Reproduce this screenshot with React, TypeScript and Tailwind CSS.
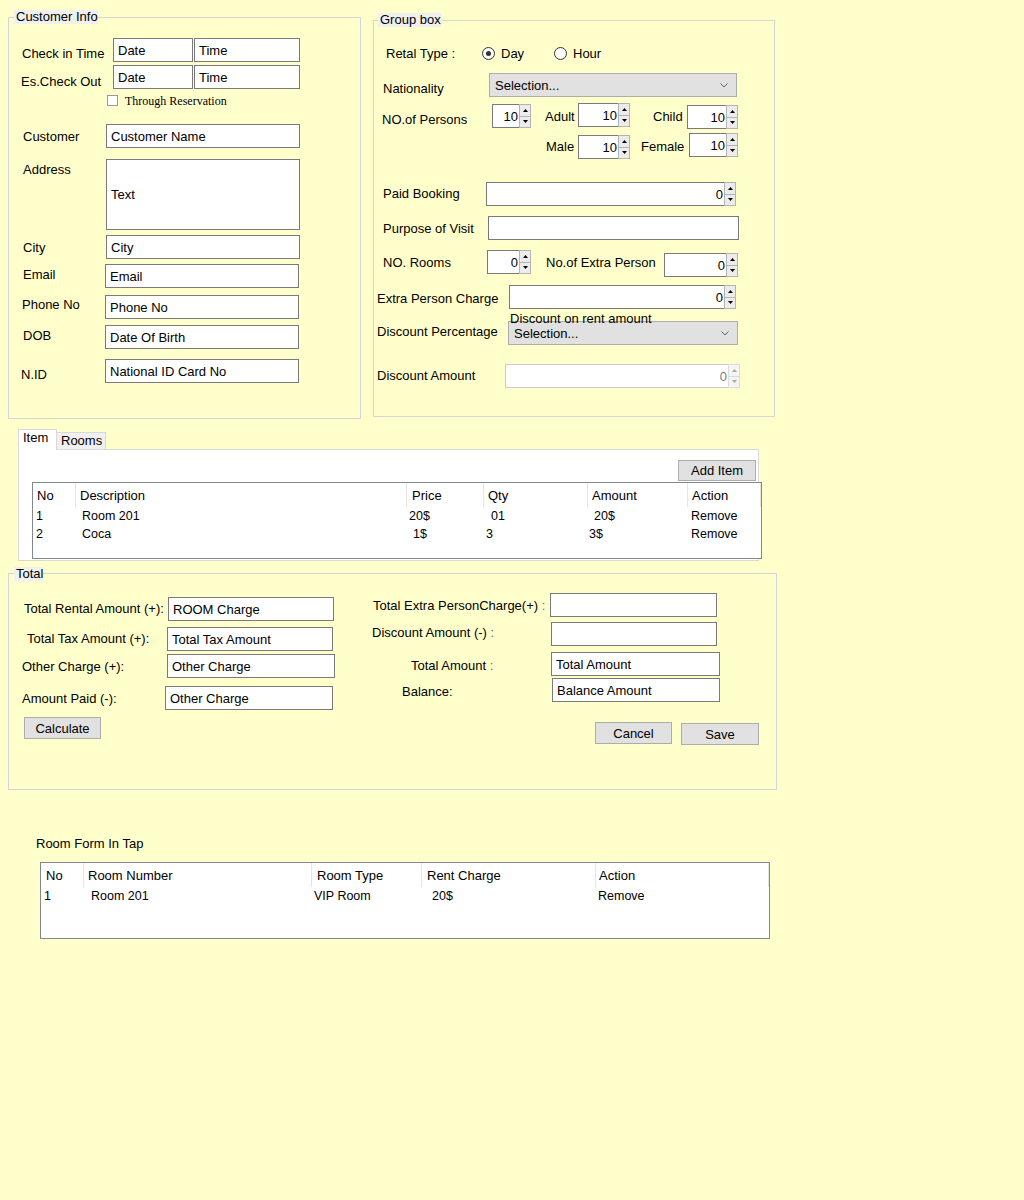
import React from "react";

type Cell = [string, string];

function Field({ children, className = "" }: { children?: React.ReactNode; className?: string }) {
  return (
    <div className={`flex h-[24px] shrink-0 items-center whitespace-nowrap border border-[#7a7a7a] bg-white pl-[4px] ${className}`}>
      {children}
    </div>
  );
}

function Btn({ children, className = "" }: { children: React.ReactNode; className?: string }) {
  return (
    <div className={`flex shrink-0 items-center justify-center border border-[#adadad] bg-[#e1e1e1] ${className}`}>
      {children}
    </div>
  );
}

function Arrow({ up, color }: { up?: boolean; color: string }) {
  return (
    <svg width="5" height="3" viewBox="0 0 5 3">
      <polygon points={up ? "0,3 2.5,0 5,3" : "0,0 2.5,3 5,0"} fill={color} />
    </svg>
  );
}

function Spin({ value, className = "", disabled = false }: { value: string; className?: string; disabled?: boolean }) {
  return (
    <div className={`flex h-[24px] shrink-0 ${className}`}>
      <div
        className={
          disabled
            ? "flex min-w-0 flex-1 items-center justify-end border-y border-l border-[#cccccc] bg-white pr-[1px] text-[#7a7a7a]"
            : "flex min-w-0 flex-1 items-center justify-end border-y border-l border-[#7a7a7a] bg-white pr-[1px]"
        }
      >
        {value}
      </div>
      <div className="flex w-[12px] flex-col">
        <div className={disabled ? "flex flex-1 items-center justify-center border border-[#dcdcdc] bg-[#f4f4f4]" : "flex flex-1 items-center justify-center border border-[#b4b4b4] bg-[#ececec]"}>
          <Arrow up color={disabled ? "#a8a8a8" : "#000000"} />
        </div>
        <div className={disabled ? "flex flex-1 items-center justify-center border border-t-0 border-[#dcdcdc] bg-[#f4f4f4]" : "flex flex-1 items-center justify-center border border-t-0 border-[#b4b4b4] bg-[#ececec]"}>
          <Arrow color={disabled ? "#a8a8a8" : "#000000"} />
        </div>
      </div>
    </div>
  );
}

function Combo({ className = "" }: { className?: string }) {
  return (
    <div className={`flex h-[24px] shrink-0 items-center justify-between border border-[#adadad] bg-[#e1e1e1] pl-[5px] pr-[8px] ${className}`}>
      <span>Selection...</span>
      <svg width="8" height="5" viewBox="0 0 8 5">
        <polyline points="0.5,0.5 4,4 7.5,0.5" fill="none" stroke="#606060" strokeWidth="1" />
      </svg>
    </div>
  );
}

function Radio({ checked }: { checked?: boolean }) {
  return (
    <span className="flex h-[13px] w-[13px] shrink-0 items-center justify-center rounded-full border border-[#333333] bg-white">
      {checked && <span className="h-[5px] w-[5px] rounded-full bg-[#333333]" />}
    </span>
  );
}

function ListView({
  cols,
  rows,
  className = "",
}: {
  cols: { w: string; label: string; pl: string }[];
  rows: Cell[][];
  className?: string;
}) {
  return (
    <div className={`h-[77px] w-[730px] shrink-0 border border-[#828790] bg-white ${className}`}>
      <div className="flex h-[24px]">
        {cols.map((c) => (
          <div key={c.label} className={`flex shrink-0 items-center border-r border-[#e5e5e5] whitespace-nowrap ${c.w} ${c.pl}`}>
            {c.label}
          </div>
        ))}
      </div>
      {rows.map((r, i) => (
        <div key={i} className="flex h-[18px] text-[12.5px] leading-[18px]">
          {r.map(([text, pl], j) => (
            <div key={j} className={`shrink-0 whitespace-nowrap ${cols[j].w} ${pl}`}>
              {text}
            </div>
          ))}
        </div>
      ))}
    </div>
  );
}

const itemCols = [
  { w: "w-[43px]", label: "No", pl: "pl-[4px]" },
  { w: "w-[331px]", label: "Description", pl: "pl-[4px]" },
  { w: "w-[77px]", label: "Price", pl: "pl-[5px]" },
  { w: "w-[104px]", label: "Qty", pl: "pl-[4px]" },
  { w: "w-[100px]", label: "Amount", pl: "pl-[4px]" },
  { w: "w-[73px]", label: "Action", pl: "pl-[4px]" },
];

const itemRows: Cell[][] = [
  [["1", "pl-[3px]"], ["Room 201", "pl-[6px]"], ["20$", "pl-[2px]"], ["01", "pl-[7px]"], ["20$", "pl-[6px]"], ["Remove", "pl-[3px]"]],
  [["2", "pl-[3px]"], ["Coca", "pl-[6px]"], ["1$", "pl-[6px]"], ["3", "pl-[2px]"], ["3$", "pl-[1px]"], ["Remove", "pl-[3px]"]],
];

const roomCols = [
  { w: "w-[43px]", label: "No", pl: "pl-[5px]" },
  { w: "w-[228px]", label: "Room Number", pl: "pl-[4px]" },
  { w: "w-[110px]", label: "Room Type", pl: "pl-[5px]" },
  { w: "w-[174px]", label: "Rent Charge", pl: "pl-[5px]" },
  { w: "w-[173px]", label: "Action", pl: "pl-[3px]" },
];

const roomRows: Cell[][] = [
  [["1", "pl-[3px]"], ["Room 201", "pl-[7px]"], ["VIP Room", "pl-[2px]"], ["20$", "pl-[10px]"], ["Remove", "pl-[2px]"]],
];

function CustomerInfo() {
  return (
    <div className="relative flex h-[402px] w-[353px] shrink-0 flex-col border border-[#d5d5d5]">
      <div className="absolute left-[5px] top-[-8px] h-[14px] whitespace-nowrap bg-[#f0f0f0] pl-[2px] leading-[14px]">Customer Info</div>

      <div className="mt-[20px] flex h-[24px]">
        <div className="w-[104px] shrink-0 whitespace-nowrap pl-[13px] pt-[8px]">Check in Time</div>
        <Field className="w-[80px]">Date</Field>
        <Field className="ml-[1px] w-[106px]">Time</Field>
      </div>
      <div className="mt-[3px] flex h-[24px]">
        <div className="w-[104px] shrink-0 whitespace-nowrap pl-[12px] pt-[9px]">Es.Check Out</div>
        <Field className="w-[80px]">Date</Field>
        <Field className="ml-[1px] w-[106px]">Time</Field>
      </div>
      <div className="mt-[6px] flex h-[11px] items-center pl-[98px]">
        <div className="h-[11px] w-[11px] shrink-0 border border-[#9a9a9a] bg-white" />
        <span className="ml-[7px] whitespace-nowrap font-['Liberation_Serif','Times_New_Roman',serif] text-[12px] leading-[14px]">
          Through Reservation
        </span>
      </div>

      <div className="mt-[18px] flex h-[24px]">
        <div className="w-[97px] shrink-0 pl-[14px] pt-[5px]">Customer</div>
        <Field className="w-[194px]">Customer Name</Field>
      </div>
      <div className="mt-[11px] flex">
        <div className="w-[97px] shrink-0 pl-[14px] pt-[3px]">Address</div>
        <Field className="h-[71px] w-[194px]">Text</Field>
      </div>
      <div className="mt-[5px] flex h-[24px]">
        <div className="w-[97px] shrink-0 pl-[14px] pt-[5px]">City</div>
        <Field className="w-[194px]">City</Field>
      </div>
      <div className="mt-[5px] flex h-[24px]">
        <div className="w-[96px] shrink-0 pl-[14px] pt-[3px]">Email</div>
        <Field className="w-[194px]">Email</Field>
      </div>
      <div className="mt-[7px] flex h-[24px]">
        <div className="w-[96px] shrink-0 pl-[13px] pt-[2px]">Phone No</div>
        <Field className="w-[194px]">Phone No</Field>
      </div>
      <div className="mt-[6px] flex h-[24px]">
        <div className="w-[96px] shrink-0 pl-[14px] pt-[3px]">DOB</div>
        <Field className="w-[194px]">Date Of Birth</Field>
      </div>
      <div className="mt-[10px] flex h-[24px]">
        <div className="w-[96px] shrink-0 pl-[12px] pt-[8px]">N.ID</div>
        <Field className="w-[194px]">National ID Card No</Field>
      </div>
    </div>
  );
}

function GroupBox() {
  return (
    <div className="relative ml-[12px] mt-[3px] flex h-[397px] w-[402px] shrink-0 flex-col border border-[#d5d5d5]">
      <div className="absolute left-[4px] top-[-8px] h-[14px] whitespace-nowrap bg-[#f0f0f0] pl-[2px] pr-[1px] leading-[14px]">Group box</div>

      <div className="mt-[25px] flex h-[15px] items-center">
        <div className="w-[108px] shrink-0 whitespace-nowrap pl-[12px]">Retal Type :</div>
        <div className="flex w-[72px] shrink-0 items-center">
          <Radio checked />
          <span className="ml-[6px]">Day</span>
        </div>
        <div className="flex items-center">
          <Radio />
          <span className="ml-[6px]">Hour</span>
        </div>
      </div>

      <div className="mt-[12px] flex h-[24px]">
        <div className="w-[115px] shrink-0 pl-[9px] pt-[8px]">Nationality</div>
        <Combo className="w-[248px]" />
      </div>

      <div className="mt-[6px] flex items-start">
        <div className="w-[118px] shrink-0 whitespace-nowrap pl-[8px] pt-[9px]">NO.of Persons</div>
        <Spin value="10" className="mt-[1px] w-[39px]" />
        <div className="w-[47px] shrink-0 pl-[14px] pt-[6px]">Adult</div>
        <Spin value="10" className="w-[52px]" />
        <div className="w-[57px] shrink-0 pl-[23px] pt-[6px]">Child</div>
        <Spin value="10" className="mt-[2px] w-[51px]" />
      </div>
      <div className="mt-[4px] flex items-start">
        <div className="w-[204px] shrink-0 pl-[172px] pt-[6px]">Male</div>
        <Spin value="10" className="mt-[2px] w-[52px]" />
        <div className="w-[59px] shrink-0 pl-[11px] pt-[6px]">Female</div>
        <Spin value="10" className="w-[49px]" />
      </div>

      <div className="mt-[23px] flex h-[24px]">
        <div className="w-[112px] shrink-0 whitespace-nowrap pl-[9px] pt-[4px]">Paid Booking</div>
        <Spin value="0" className="w-[250px]" />
      </div>
      <div className="mt-[10px] flex h-[24px]">
        <div className="w-[114px] shrink-0 whitespace-nowrap pl-[9px] pt-[5px]">Purpose of Visit</div>
        <Field className="w-[251px]" />
      </div>
      <div className="mt-[10px] flex items-start">
        <div className="w-[113px] shrink-0 whitespace-nowrap pl-[9px] pt-[5px]">NO. Rooms</div>
        <Spin value="0" className="w-[44px]" />
        <div className="w-[133px] shrink-0 whitespace-nowrap pl-[15px] pt-[5px]">No.of Extra Person</div>
        <Spin value="0" className="mt-[3px] w-[74px]" />
      </div>
      <div className="mt-[8px] flex h-[24px]">
        <div className="w-[135px] shrink-0 whitespace-nowrap pl-[3px] pt-[6px]">Extra Person Charge</div>
        <Spin value="0" className="w-[227px]" />
      </div>
      <div className="mt-[12px] flex h-[24px]">
        <div className="w-[134px] shrink-0 whitespace-nowrap pl-[3px] pt-[3px]">Discount Percentage</div>
        <div className="relative w-[230px] shrink-0">
          <Combo className="w-[230px]" />
          <span className="absolute left-[2px] top-[-10px] whitespace-nowrap">Discount on rent amount</span>
        </div>
      </div>
      <div className="mt-[19px] flex h-[24px]">
        <div className="w-[131px] shrink-0 whitespace-nowrap pl-[3px] pt-[4px]">Discount Amount</div>
        <Spin value="0" className="w-[235px]" disabled />
      </div>
    </div>
  );
}

function ItemTabs() {
  return (
    <div className="ml-[10px] mt-[10px] w-[741px]">
      <div className="flex h-[20px] items-end">
        <div className="relative z-10 mb-[-1px] h-[21px] w-[39px] border-x border-t border-[#d9d9d9] bg-white pl-[4px]">Item</div>
        <div className="h-[17px] w-[49px] border-r border-t border-[#d9d9d9] bg-[#f0f0f0] pl-[4px]">Rooms</div>
      </div>
      <div className="flex h-[112px] flex-col border border-[#d9d9d9] bg-white">
        <Btn className="ml-[659px] mt-[10px] h-[21px] w-[78px]">Add Item</Btn>
        <ListView cols={itemCols} rows={itemRows} className="ml-[13px] mt-[1px]" />
      </div>
    </div>
  );
}

function TotalBox() {
  return (
    <div className="relative mt-[12px] flex h-[217px] w-[769px] border border-[#d5d5d5]">
      <div className="absolute left-[5px] top-[-7px] h-[14px] bg-[#f0f0f0] pl-[2px] leading-[14px]">Total</div>

      <div className="flex w-[363px] shrink-0 flex-col">
        <div className="mt-[23px] flex h-[24px]">
          <div className="w-[159px] shrink-0 whitespace-nowrap pl-[15px] pt-[4px]">Total Rental Amount (+):</div>
          <Field className="w-[166px]">ROOM Charge</Field>
        </div>
        <div className="mt-[6px] flex h-[24px]">
          <div className="w-[158px] shrink-0 whitespace-nowrap pl-[18px] pt-[4px]">Total Tax Amount (+):</div>
          <Field className="w-[166px]">Total Tax Amount</Field>
        </div>
        <div className="mt-[3px] flex h-[24px]">
          <div className="w-[158px] shrink-0 whitespace-nowrap pl-[13px] pt-[5px]">Other Charge (+):</div>
          <Field className="w-[168px]">Other Charge</Field>
        </div>
        <div className="mt-[8px] flex h-[24px]">
          <div className="w-[156px] shrink-0 whitespace-nowrap pl-[13px] pt-[5px]">Amount Paid (-):</div>
          <Field className="w-[168px]">Other Charge</Field>
        </div>
        <Btn className="ml-[15px] mt-[7px] h-[22px] w-[77px]">Calculate</Btn>
      </div>

      <div className="flex flex-col">
        <div className="mt-[19px] flex h-[24px]">
          <div className="w-[178px] shrink-0 whitespace-nowrap pl-[1px] pt-[5px]">
            Total Extra PersonCharge(+) <span className="text-[#6b6b6b]">:</span>
          </div>
          <Field className="w-[167px]" />
        </div>
        <div className="mt-[5px] flex h-[24px]">
          <div className="w-[179px] shrink-0 whitespace-nowrap pt-[3px]">
            Discount Amount (-) <span className="text-[#6b6b6b]">:</span>
          </div>
          <Field className="w-[166px]" />
        </div>
        <div className="mt-[6px] flex h-[24px]">
          <div className="w-[179px] shrink-0 whitespace-nowrap pl-[39px] pt-[6px]">
            Total Amount <span className="text-[#6b6b6b]">:</span>
          </div>
          <Field className="w-[169px]">Total Amount</Field>
        </div>
        <div className="mt-[2px] flex h-[24px]">
          <div className="w-[180px] shrink-0 whitespace-nowrap pl-[30px] pt-[6px]">Balance:</div>
          <Field className="w-[168px]">Balance Amount</Field>
        </div>
        <div className="mt-[20px] flex items-start">
          <Btn className="ml-[223px] h-[22px] w-[77px]">Cancel</Btn>
          <Btn className="ml-[9px] mt-[1px] h-[22px] w-[78px]">Save</Btn>
        </div>
      </div>
    </div>
  );
}

export default function App() {
  return (
    <div className="min-h-[1200px] w-full bg-[#ffffcc] pl-[8px] pt-[17px] font-['Liberation_Sans',Arial,sans-serif] text-[13px] leading-[15px] text-black">
      <div className="flex items-start">
        <CustomerInfo />
        <GroupBox />
      </div>
      <ItemTabs />
      <TotalBox />
      <div className="ml-[28px] mt-[46px]">Room Form In Tap</div>
      <ListView cols={roomCols} rows={roomRows} className="ml-[32px] mt-[11px]" />
    </div>
  );
}
